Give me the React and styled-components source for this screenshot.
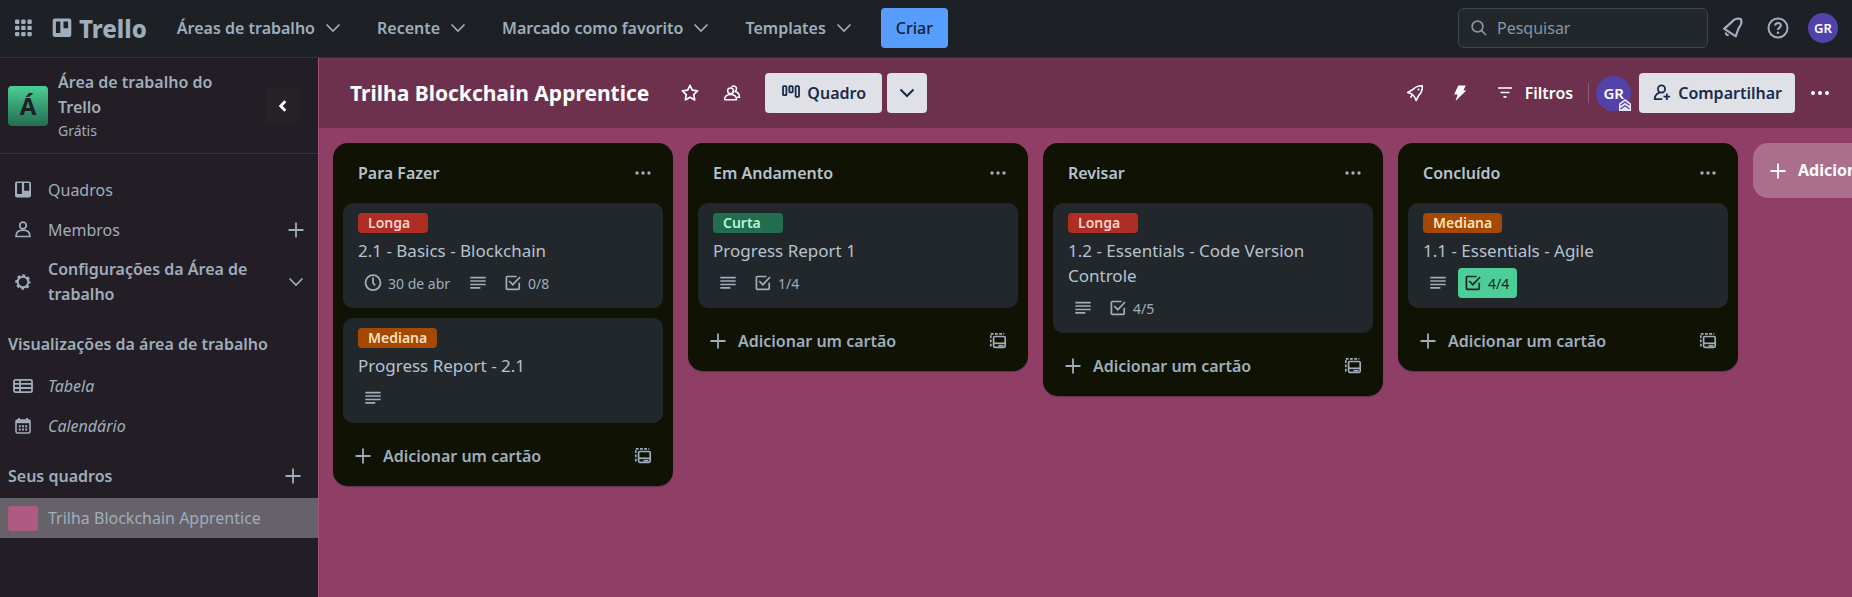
import React from "react";
import styled, { createGlobalStyle, css } from "styled-components";

const GlobalStyle = createGlobalStyle`
  *, *::before, *::after { box-sizing: border-box; }
  body {
    margin: 0;
    font-family: "Noto Sans", "Open Sans", sans-serif;
    font-size: 16px;
    line-height: 25px;
    color: #9fadbc;
    background: #8f3f65;
  }
  button, input { font: inherit; color: inherit; }
  button { border: 0; padding: 0; background: none; cursor: pointer; white-space: nowrap; }
  a { color: inherit; text-decoration: none; }
  h1, h2, h3, p, ul { margin: 0; padding: 0; font-size: inherit; font-weight: inherit; }
  ul { list-style: none; }
  svg { display: block; flex: none; }
`;

/* ---------- icons ---------- */

const Svg = ({ size = 20, children, ...rest }) => (
  <svg
    width={size}
    height={size}
    viewBox="0 0 20 20"
    fill="none"
    stroke="currentColor"
    strokeWidth="1.7"
    aria-hidden="true"
    {...rest}
  >
    {children}
  </svg>
);

const AppsIcon = () => (
  <Svg fill="currentColor" stroke="none">
    {[1, 7.2, 13.4].map((y) =>
      [1, 7.2, 13.4].map((x) => <rect key={`${x}-${y}`} x={x} y={y + 0.5} width="4.400" height="4.400" rx="1.200" />)
    )}
  </Svg>
);

const LogoIcon = () => (
  <Svg fill="currentColor" stroke="none">
    <path
      fillRule="evenodd"
      d="M3 .5h14A2.300 2.300 0 0 1 19.300 2.800v14a2.300 2.300 0 0 1-2.300 2.300H3A2.300 2.300 0 0 1 .7 16.800V2.800A2.300 2.300 0 0 1 3 .5Zm.9 3v11.600h4.400V3.500H3.900Zm7.600 0v6.800h4.600V3.500h-4.600Z"
    />
  </Svg>
);

const ChevronIcon = ({ width = 1.6 }) => (
  <Svg strokeWidth={width}>
    <path d="M3.500 6.500 10 13l6.500-6.500" />
  </Svg>
);

const CollapseIcon = () => (
  <Svg strokeWidth="2.800">
    <path d="M12.300 5.200 7.700 10l4.600 4.800" />
  </Svg>
);

const PlusIcon = () => (
  <Svg strokeWidth="1.800">
    <path d="M10 2.500v15M2.500 10h15" />
  </Svg>
);

const SearchIcon = () => (
  <Svg>
    <circle cx="8.500" cy="8.500" r="5.400" />
    <path d="m12.400 12.400 4.600 4.600" />
  </Svg>
);

const BellIcon = () => (
  <Svg size={24} viewBox="0 0 24 24" strokeWidth="2.200">
    <path d="M13 3.800c1.600-1.300 4.400-1.500 6.800-.8.900 2.400.6 5.300-.8 7-2 2.300-2.600 6-4.200 10.300L3.100 12.600C6.200 10.600 10.300 6.400 13 3.800Z" strokeLinejoin="round" />
    <path d="M5 16.400c-.4 1.600.8 2.900 2.700 2.600" />
  </Svg>
);

const HelpIcon = () => (
  <Svg size={24} viewBox="0 0 24 24" strokeWidth="2">
    <circle cx="12" cy="12" r="9.500" />
    <path d="M9.200 9.700c0-3.700 5.700-3.500 5.700-.2 0 2-2.900 2.300-2.900 4.400" />
    <circle cx="12" cy="16.800" r="1.300" fill="currentColor" stroke="none" />
  </Svg>
);

const StarIcon = () => (
  <Svg strokeWidth="1.700">
    <path d="m10 2.300 2.300 4.900 5.300.7-3.900 3.700 1 5.300-4.700-2.600-4.700 2.600 1-5.300-3.900-3.700 5.300-.7L10 2.300Z" strokeLinejoin="round" />
  </Svg>
);

const WorkspaceVisibleIcon = () => (
  <Svg strokeWidth="1.500">
    <circle cx="8.500" cy="7.800" r="2.900" />
    <path d="M2.500 16.800c0-3.200 2.300-5.400 6-5.400s6 2.200 6 5.400h-12Z" strokeLinejoin="round" />
    <path d="M9.500 4.200c1.200-2 5.100-1.400 5 1.600 0 1.300-.6 2-1.300 2.700 2.600.8 4.300 2.700 4.300 5.700h-2.600M11.200 8.200l-1 3.600" />
  </Svg>
);

const BoardViewIcon = () => (
  <Svg strokeWidth="1.800">
    <rect x="2" y="3.200" width="3.400" height="9" rx=".8" />
    <rect x="8.300" y="3.200" width="3.400" height="6.200" rx=".8" />
    <rect x="14.600" y="3.200" width="3.400" height="10.600" rx=".8" />
  </Svg>
);

const RocketIcon = () => (
  <Svg strokeWidth="1.600">
    <path d="M17.300 2.700c-4.200-.1-6.900 1.100-9 3.600L2.700 9.500l3.800 1.300 3 3 1.600 3.700 3-5.600c2.300-2.200 3.400-5 3.200-9.200Z" strokeLinejoin="round" />
    <path d="m7.200 12-1.700 2.600" />
    <circle cx="13.500" cy="6.500" r="1" fill="currentColor" stroke="none" />
  </Svg>
);

const BoltIcon = () => (
  <Svg fill="currentColor" stroke="none">
    <path d="M8.300 2.500h7.400l-2.300 5h2.900L5.600 18l2-6.500H4.100l4.200-9Z" />
  </Svg>
);

const FilterIcon = () => (
  <Svg strokeWidth="1.700">
    <path d="M3 5h14M5.500 9.500h9M8.500 13.800h3" />
  </Svg>
);

const AddMemberIcon = () => (
  <Svg strokeWidth="1.800">
    <circle cx="9.500" cy="6" r="3.600" />
    <path d="M7.300 9.700c-3 1.300-4.600 3-4.600 6.500h7.600M14.800 10.400v6.600M11.500 13.700h6.600" />
  </Svg>
);

const DotsIcon = ({ radius = 1.7, gap = 6 }) => (
  <Svg fill="currentColor" stroke="none">
    <circle cx={10 - gap} cy="10" r={radius} />
    <circle cx="10" cy="10" r={radius} />
    <circle cx={10 + gap} cy="10" r={radius} />
  </Svg>
);

const BoardsIcon = () => (
  <Svg fill="currentColor" stroke="none">
    <path
      fillRule="evenodd"
      d="M4 1.500h12a2 2 0 0 1 2 2v12a2 2 0 0 1-2 2H4a2 2 0 0 1-2-2v-12a2 2 0 0 1 2-2Zm.1 1.600v11h4.800v-11H4.100Zm7 0v7.600h5.100V3.100h-5.100Z"
    />
  </Svg>
);

const PersonIcon = () => (
  <Svg strokeWidth="1.700">
    <circle cx="10" cy="5.500" r="3.300" />
    <path d="M3 16.500c0-3.700 2.400-6.300 7-6.300s7 2.600 7 6.300H3Z" strokeLinejoin="round" />
  </Svg>
);

const GearIcon = () => (
  <Svg strokeWidth="2">
    <circle cx="10" cy="10" r="5.300" />
    <circle cx="10" cy="10" r="6.500" strokeWidth="2.400" strokeDasharray="2.800 2.305" strokeDashoffset="1.400" />
  </Svg>
);

const TableIcon = () => (
  <Svg strokeWidth="1.800">
    <rect x="1" y="3.800" width="18" height="12.400" rx="1.600" />
    <path d="M1 7.800h18M1 12h18M7 3.800v12.400" />
  </Svg>
);

const CalendarIcon = () => (
  <Svg>
    <rect x="3" y="4" width="14" height="13" rx="1.500" strokeWidth="1.600" />
    <path d="M3 5.700h14" strokeWidth="3" />
    <path d="M6 2v3M14 2v3" strokeWidth="1.800" />
    <path d="M5.800 10.200h8.400M5.800 13.600h8.400" strokeWidth="2" strokeDasharray="2 1.200" />
  </Svg>
);

const ClockIcon = () => (
  <Svg strokeWidth="1.800">
    <circle cx="10" cy="9.700" r="7.500" />
    <path d="M10 4.600v5.100l2 2.800" />
  </Svg>
);

const DescriptionIcon = () => (
  <Svg strokeWidth="1.700">
    <path d="M2.300 4.700h15.400M2.300 8h15.400M2.300 11.500h15.400M2.300 14.900h10" />
  </Svg>
);

const ChecklistIcon = () => (
  <Svg strokeWidth="1.700">
    <path d="M13.500 3.500H4.200a.8.800 0 0 0-.8.800v11.200c0 .4.400.8.800.8h11.200c.4 0 .8-.4.800-.8V9.800" />
    <path d="m6.200 8 3.600 3.700 7.300-7.700" />
  </Svg>
);

const TemplateIcon = () => (
  <Svg strokeWidth="1.700">
    <rect x="5.600" y="5.500" width="11.600" height="10.800" rx="1.200" />
    <path d="M5.600 12.300h12" />
    <path d="M10.500 14.700h5" />
    <path d="M2.800 15.500V2.900h13.500" strokeDasharray="2.800 1.400" />
  </Svg>
);

/* ---------- top bar ---------- */

const Page = styled.div`
  display: flex;
  flex-direction: column;
  height: 100vh;
  overflow: hidden;
`;

const TopBar = styled.header`
  display: flex;
  align-items: center;
  flex: none;
  height: 58px;
  padding: 0 14px 1px 14px;
  background: #1d2125;
  border-bottom: 1px solid #2f363a;
`;

const Brand = styled.a`
  display: flex;
  align-items: center;
  gap: 7px;
  margin: 0 20px 0 18px;
  font-size: 24px;
  font-weight: 800;
`;

const TopNav = styled.nav`
  display: flex;
  align-items: center;
  gap: 14px;
  margin-right: 17px;
`;

const MenuButton = styled.button`
  display: flex;
  align-items: center;
  gap: 8px;
  height: 40px;
  padding: 0 10px;
  font-weight: 600;
`;

const Button = styled.button`
  display: flex;
  align-items: center;
  justify-content: center;
  gap: 6px;
  height: 40px;
  min-width: 40px;
  padding: 0 ${(p) => p.$pad ?? 10}px;
  border-radius: 4px;
  font-weight: ${(p) => (p.$primary ? 500 : 600)};
  color: ${(p) => (p.$primary ? "#1d2125" : "#172b4d")};
  background: ${(p) => (p.$primary ? "#579dff" : "#dfe1e6")};
`;

const Spacer = styled.div`
  flex: 1;
`;

const SearchBox = styled.label`
  display: flex;
  align-items: center;
  gap: 8px;
  width: 250px;
  height: 40px;
  padding: 0 10px;
  border: 1px solid #3a4a4e;
  border-radius: 6px;
  background: #22272b;
  color: #8696a7;

  input {
    flex: 1;
    min-width: 0;
    padding: 0;
    border: 0;
    outline: 0;
    background: none;
  }
  input::placeholder { color: #8696a7; opacity: 1; }
`;

const IconButton = styled.button`
  display: flex;
  align-items: center;
  justify-content: center;
  flex: none;
  width: ${(p) => p.$size ?? 40}px;
  height: ${(p) => p.$size ?? 40}px;
  border-radius: 4px;
  background: ${(p) => (p.$shaded ? "#262228" : "none")};
  color: ${(p) => (p.$light ? "#fff" : "inherit")};
`;

const Avatar = styled.button`
  position: relative;
  display: flex;
  align-items: center;
  justify-content: center;
  flex: none;
  width: ${(p) => p.$size}px;
  height: ${(p) => p.$size}px;
  border-radius: 50%;
  background: #5243aa;
  color: #fff;
  font-size: ${(p) => (p.$size > 30 ? 15 : 13)}px;
  font-weight: 600;
`;

const AdminBadge = styled.span`
  position: absolute;
  right: 0;
  bottom: 0;
`;

const TopActions = styled.div`
  display: flex;
  align-items: center;
  gap: 5px;
  margin: 0 10px 0 5px;
`;

/* ---------- sidebar ---------- */

const Body = styled.div`
  display: flex;
  flex: 1;
  min-height: 0;
`;

const Sidebar = styled.aside`
  flex: none;
  width: 319px;
  background: #231e25;
  border-right: 1px solid #9a5577;
`;

const WorkspaceHead = styled.div`
  display: flex;
  align-items: center;
  height: 96px;
  padding: 0 18px 0 8px;
  border-bottom: 1px solid #39353c;
`;

const WorkspaceLogo = styled.div`
  display: grid;
  place-items: center;
  flex: none;
  width: 40px;
  height: 40px;
  margin-right: 10px;
  border-radius: 4px;
  background: linear-gradient(#4bce97, #216e4e);
  color: #1d2125;
  font-size: 24px;
  font-weight: 700;
`;

const WorkspaceName = styled.div`
  flex: 1;
  padding-right: 30px;
  font-weight: 600;

  p { font-size: 14px; line-height: 22px; font-weight: 400; }
`;

const SideList = styled.ul`
  padding-top: ${(p) => p.$top ?? 2}px;
`;

const SideRow = styled.li`
  display: flex;
  align-items: center;
  min-height: ${(p) => (p.$tall ? 64 : 40)}px;
  padding: 0 12px 0 13px;
  font-weight: ${(p) => (p.$strong ? 600 : 400)};
  font-style: ${(p) => (p.$italic ? "italic" : "normal")};

  a {
    display: flex;
    align-items: center;
    flex: 1;
    gap: 15px;
  }
  ${(p) =>
    p.$active &&
    css`
      padding-left: 8px;
      background: #67626a;
      a { gap: 10px; }
    `}
`;

const SideHeading = styled.h2`
  display: flex;
  align-items: center;
  justify-content: space-between;
  height: 40px;
  margin-top: 10px;
  padding: 0 15px 0 8px;
  font-weight: 600;
`;

const Thumb = styled.span`
  width: 30px;
  height: 25px;
  border-radius: 3px;
  background: #ae5b83;
`;

/* ---------- board ---------- */

const Board = styled.main`
  display: flex;
  flex-direction: column;
  flex: 1;
  min-width: 0;
  background: #8f3f65;
`;

const BoardBar = styled.div`
  display: flex;
  align-items: center;
  flex: none;
  height: 70px;
  padding: 0 12px 0 31px;
  background: #6d304d;
  color: #fff;
`;

const BoardTitle = styled.h1`
  font-size: 21px;
  font-weight: 700;
  white-space: nowrap;
`;

const TitleActions = styled.div`
  display: flex;
  gap: 2px;
  margin: 0 13px 0 21px;
`;

const Views = styled.div`
  display: flex;
  gap: 5px;
`;

const BoardActions = styled.div`
  display: flex;
  align-items: center;
  gap: 5px;
`;

const FilterButton = styled(MenuButton)`
  gap: 10px;
`;

const Divider = styled.span`
  width: 1px;
  height: 20px;
  margin-right: 2px;
  background: #8d5a74;
`;

const BoardMember = styled.div`
  padding-right: 3px;
`;

const Lists = styled.div`
  display: flex;
  align-items: flex-start;
  flex: 1;
  gap: 15px;
  padding: 15px 0 15px 14px;
  overflow-x: auto;
  scrollbar-width: none;
`;

const List = styled.section`
  flex: none;
  width: 340px;
  padding: 0 10px;
  border-radius: 15px;
  background: #101204;
  box-shadow: 0 1px 1px rgba(9, 30, 66, 0.4);
`;

const ListHead = styled.div`
  display: flex;
  align-items: center;
  justify-content: space-between;
  height: 60px;
  padding: 0 0 0 15px;

  h2 { color: #b6c2cf; font-weight: 600; }
`;

const Cards = styled.div`
  display: flex;
  flex-direction: column;
  gap: 10px;
`;

const Card = styled.article`
  display: flex;
  flex-direction: column;
  align-items: flex-start;
  gap: 5px;
  padding: 10px 15px;
  border-radius: 10px;
  background: #22272b;

  h3 { color: #b6c2cf; font-size: 17px; }
`;

const tones = {
  red: ["#ae2e24", "#ffd2cc"],
  orange: ["#a54800", "#ffe2bd"],
  green: ["#216e4e", "#baf3db"],
};

const Tag = styled.span`
  min-width: 70px;
  height: 20px;
  padding: 0 10px;
  border-radius: 4px;
  background: ${(p) => tones[p.$tone][0]};
  color: ${(p) => tones[p.$tone][1]};
  font-size: 14px;
  line-height: 20px;
  font-weight: 600;
`;

const Badges = styled.div`
  display: flex;
  gap: 5px;
`;

const Badge = styled.span`
  display: flex;
  align-items: center;
  gap: 5px;
  height: 30px;
  padding: 0 ${(p) => (p.$text ? 8 : 5)}px 0 5px;
  border-radius: 4px;
  font-size: 14px;
  background: ${(p) => (p.$done ? "#4bce97" : "none")};
  color: ${(p) => (p.$done ? "#1d2125" : "inherit")};
`;

const ListFoot = styled.div`
  display: flex;
  align-items: center;
  justify-content: space-between;
  padding: 13px 0 10px;
`;

const AddCard = styled.button`
  display: flex;
  align-items: center;
  gap: 10px;
  height: 40px;
  padding: 0 10px;
  font-weight: 600;
`;

const AddList = styled.button`
  display: flex;
  align-items: center;
  flex: none;
  gap: 10px;
  width: 340px;
  height: 55px;
  padding: 0 15px;
  border-radius: 15px;
  background: #ab6e8b;
  color: #fff;
  font-weight: 700;
`;

/* ---------- data ---------- */

const menus = ["Áreas de trabalho", "Recente", "Marcado como favorito", "Templates"];

const lists = [
  {
    title: "Para Fazer",
    cards: [
      { tag: "Longa", tone: "red", title: "2.1 - Basics - Blockchain", due: "30 de abr", checks: "0/8" },
      { tag: "Mediana", tone: "orange", title: "Progress Report - 2.1" },
    ],
  },
  {
    title: "Em Andamento",
    cards: [{ tag: "Curta", tone: "green", title: "Progress Report 1", checks: "1/4" }],
  },
  {
    title: "Revisar",
    cards: [{ tag: "Longa", tone: "red", title: "1.2 - Essentials - Code Version Controle", checks: "4/5" }],
  },
  {
    title: "Concluído",
    cards: [{ tag: "Mediana", tone: "orange", title: "1.1 - Essentials - Agile", checks: "4/4", done: true }],
  },
];

const CardItem = ({ card }) => (
  <Card>
    <Tag $tone={card.tone}>{card.tag}</Tag>
    <h3>{card.title}</h3>
    <Badges>
      {card.due && (
        <Badge $text>
          <ClockIcon />
          {card.due}
        </Badge>
      )}
      <Badge>
        <DescriptionIcon />
      </Badge>
      {card.checks && (
        <Badge $text $done={card.done}>
          <ChecklistIcon />
          {card.checks}
        </Badge>
      )}
    </Badges>
  </Card>
);

export default function App() {
  return (
    <Page>
      <GlobalStyle />
      <TopBar>
        <IconButton $size={20} aria-label="Mais da Atlassian">
          <AppsIcon />
        </IconButton>
        <Brand href="#">
          <LogoIcon />
          Trello
        </Brand>
        <TopNav>
          {menus.map((m) => (
            <MenuButton key={m}>
              {m}
              <ChevronIcon />
            </MenuButton>
          ))}
        </TopNav>
        <Button $primary $pad={15}>Criar</Button>
        <Spacer />
        <SearchBox>
          <SearchIcon />
          <input type="text" placeholder="Pesquisar" aria-label="Pesquisar" />
        </SearchBox>
        <TopActions>
          <IconButton aria-label="Notificações">
            <BellIcon />
          </IconButton>
          <IconButton aria-label="Informações">
            <HelpIcon />
          </IconButton>
        </TopActions>
        <Avatar $size={30}>GR</Avatar>
      </TopBar>

      <Body>
        <Sidebar>
          <WorkspaceHead>
            <WorkspaceLogo>Á</WorkspaceLogo>
            <WorkspaceName>
              Área de trabalho do Trello
              <p>Grátis</p>
            </WorkspaceName>
            <IconButton $size={35} $light $shaded aria-label="Recolher barra lateral">
              <CollapseIcon />
            </IconButton>
          </WorkspaceHead>

          <SideList $top={16}>
            <SideRow>
              <a href="#"><BoardsIcon />Quadros</a>
            </SideRow>
            <SideRow>
              <a href="#"><PersonIcon />Membros</a>
              <IconButton $size={20} aria-label="Adicionar membro"><PlusIcon /></IconButton>
            </SideRow>
            <SideRow $strong $tall>
              <a href="#"><GearIcon />Configurações da Área de trabalho</a>
              <ChevronIcon />
            </SideRow>
          </SideList>

          <SideHeading>Visualizações da área de trabalho</SideHeading>
          <SideList>
            <SideRow $italic>
              <a href="#"><TableIcon />Tabela</a>
            </SideRow>
            <SideRow $italic>
              <a href="#"><CalendarIcon />Calendário</a>
            </SideRow>
          </SideList>

          <SideHeading>
            Seus quadros
            <IconButton $size={20} aria-label="Criar quadro"><PlusIcon /></IconButton>
          </SideHeading>
          <SideList>
            <SideRow $active>
              <a href="#"><Thumb />Trilha Blockchain Apprentice</a>
            </SideRow>
          </SideList>
        </Sidebar>

        <Board>
          <BoardBar>
            <BoardTitle>Trilha Blockchain Apprentice</BoardTitle>
            <TitleActions>
              <IconButton $light aria-label="Favoritar"><StarIcon /></IconButton>
              <IconButton $light aria-label="Visibilidade"><WorkspaceVisibleIcon /></IconButton>
            </TitleActions>
            <Views>
              <Button $pad={16}><BoardViewIcon />Quadro</Button>
              <Button aria-label="Mais visualizações"><ChevronIcon width={2} /></Button>
            </Views>
            <Spacer />
            <BoardActions>
              <IconButton $light aria-label="Power-Ups"><RocketIcon /></IconButton>
              <IconButton $light aria-label="Automação"><BoltIcon /></IconButton>
              <FilterButton><FilterIcon />Filtros</FilterButton>
              <Divider />
              <BoardMember>
                <Avatar $size={35}>
                  GR
                  <AdminBadge>
                    <svg width="12" height="12" viewBox="0 0 12 12" aria-hidden="true">
                      <path d="M6 0 12 4.500V12H0V4.500Z" fill="#e6e6fa" />
                      <path d="M1.500 6.200 6 3l4.500 3.200M1.500 10 6 6.800 10.500 10" stroke="#5243aa" strokeWidth="1.400" fill="none" />
                    </svg>
                  </AdminBadge>
                </Avatar>
              </BoardMember>
              <Button $pad={13}><AddMemberIcon />Compartilhar</Button>
              <IconButton $light aria-label="Menu"><DotsIcon radius={2} gap={7} /></IconButton>
            </BoardActions>
          </BoardBar>

          <Lists>
            {lists.map((list) => (
              <List key={list.title}>
                <ListHead>
                  <h2>{list.title}</h2>
                  <IconButton aria-label="Ações da lista"><DotsIcon /></IconButton>
                </ListHead>
                <Cards>
                  {list.cards.map((card) => (
                    <CardItem key={card.title} card={card} />
                  ))}
                </Cards>
                <ListFoot>
                  <AddCard><PlusIcon />Adicionar um cartão</AddCard>
                  <IconButton aria-label="Criar a partir de template"><TemplateIcon /></IconButton>
                </ListFoot>
              </List>
            ))}
            <AddList><PlusIcon />Adicionar outra lista</AddList>
          </Lists>
        </Board>
      </Body>
    </Page>
  );
}
